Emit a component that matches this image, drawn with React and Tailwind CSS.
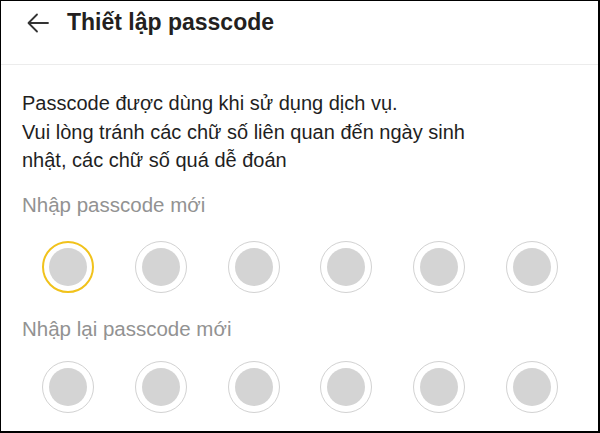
const circles = [0, 1, 2, 3, 4, 5];

const PinRow = ({ activeIndex }) => {
  return (
    <div className="flex justify-between w-[516px] ml-[41px]">
      {circles.map((i) => (
        <div
          key={i}
          className={
            i === activeIndex
              ? 'w-[52px] h-[52px] rounded-full border-2 border-[#f1c21b] grid place-items-center'
              : 'w-[52px] h-[52px] rounded-full border-[1.5px] border-[#d2d2d2] grid place-items-center'
          }
        >
          <div className="w-[38px] h-[38px] rounded-full bg-[#d4d4d4]" />
        </div>
      ))}
    </div>
  );
};

export default function App() {
  return (
    <div
      className="w-[600px] h-[433px] bg-white border-black border-l border-t border-r-2 border-b-2 overflow-hidden"
      style={{ fontFamily: '"Liberation Sans", Arial, sans-serif' }}
    >
      <header className="h-[64px] border-b border-[#ececec] flex items-start pt-[7px] pl-[26px]">
        <svg width="22" height="20" viewBox="0 0 22 20" className="mt-[5px] text-[#333]" fill="none">
          <path d="M21 10H2" stroke="currentColor" strokeWidth="1.8" strokeLinecap="round" />
          <path d="M10 1.5 1.5 10 10 18.5" stroke="currentColor" strokeWidth="1.8" strokeLinecap="round" strokeLinejoin="round" />
        </svg>
        <h1 className="ml-[18px] text-[23px] leading-[29px] font-bold text-[#231f20]">Thiết lập passcode</h1>
      </header>

      <div className="pl-[21px]">
        <p className="mt-[24px] text-[20px] leading-[28.5px] text-[#1f1f1f]">
          Passcode được dùng khi sử dụng dịch vụ.
          <br />
          Vui lòng tránh các chữ số liên quan đến ngày sinh
          <br />
          nhật, các chữ số quá dễ đoán
        </p>

        <p className="mt-[16px] text-[20.5px] leading-[28px] text-[#929292]">Nhập passcode mới</p>
      </div>

      <div className="mt-[22px]">
        <PinRow activeIndex={0} />
      </div>

      <p className="mt-[22px] pl-[21px] text-[20.5px] leading-[28px] text-[#929292]">Nhập lại passcode mới</p>

      <div className="mt-[18px]">
        <PinRow activeIndex={-1} />
      </div>
    </div>
  );
}
